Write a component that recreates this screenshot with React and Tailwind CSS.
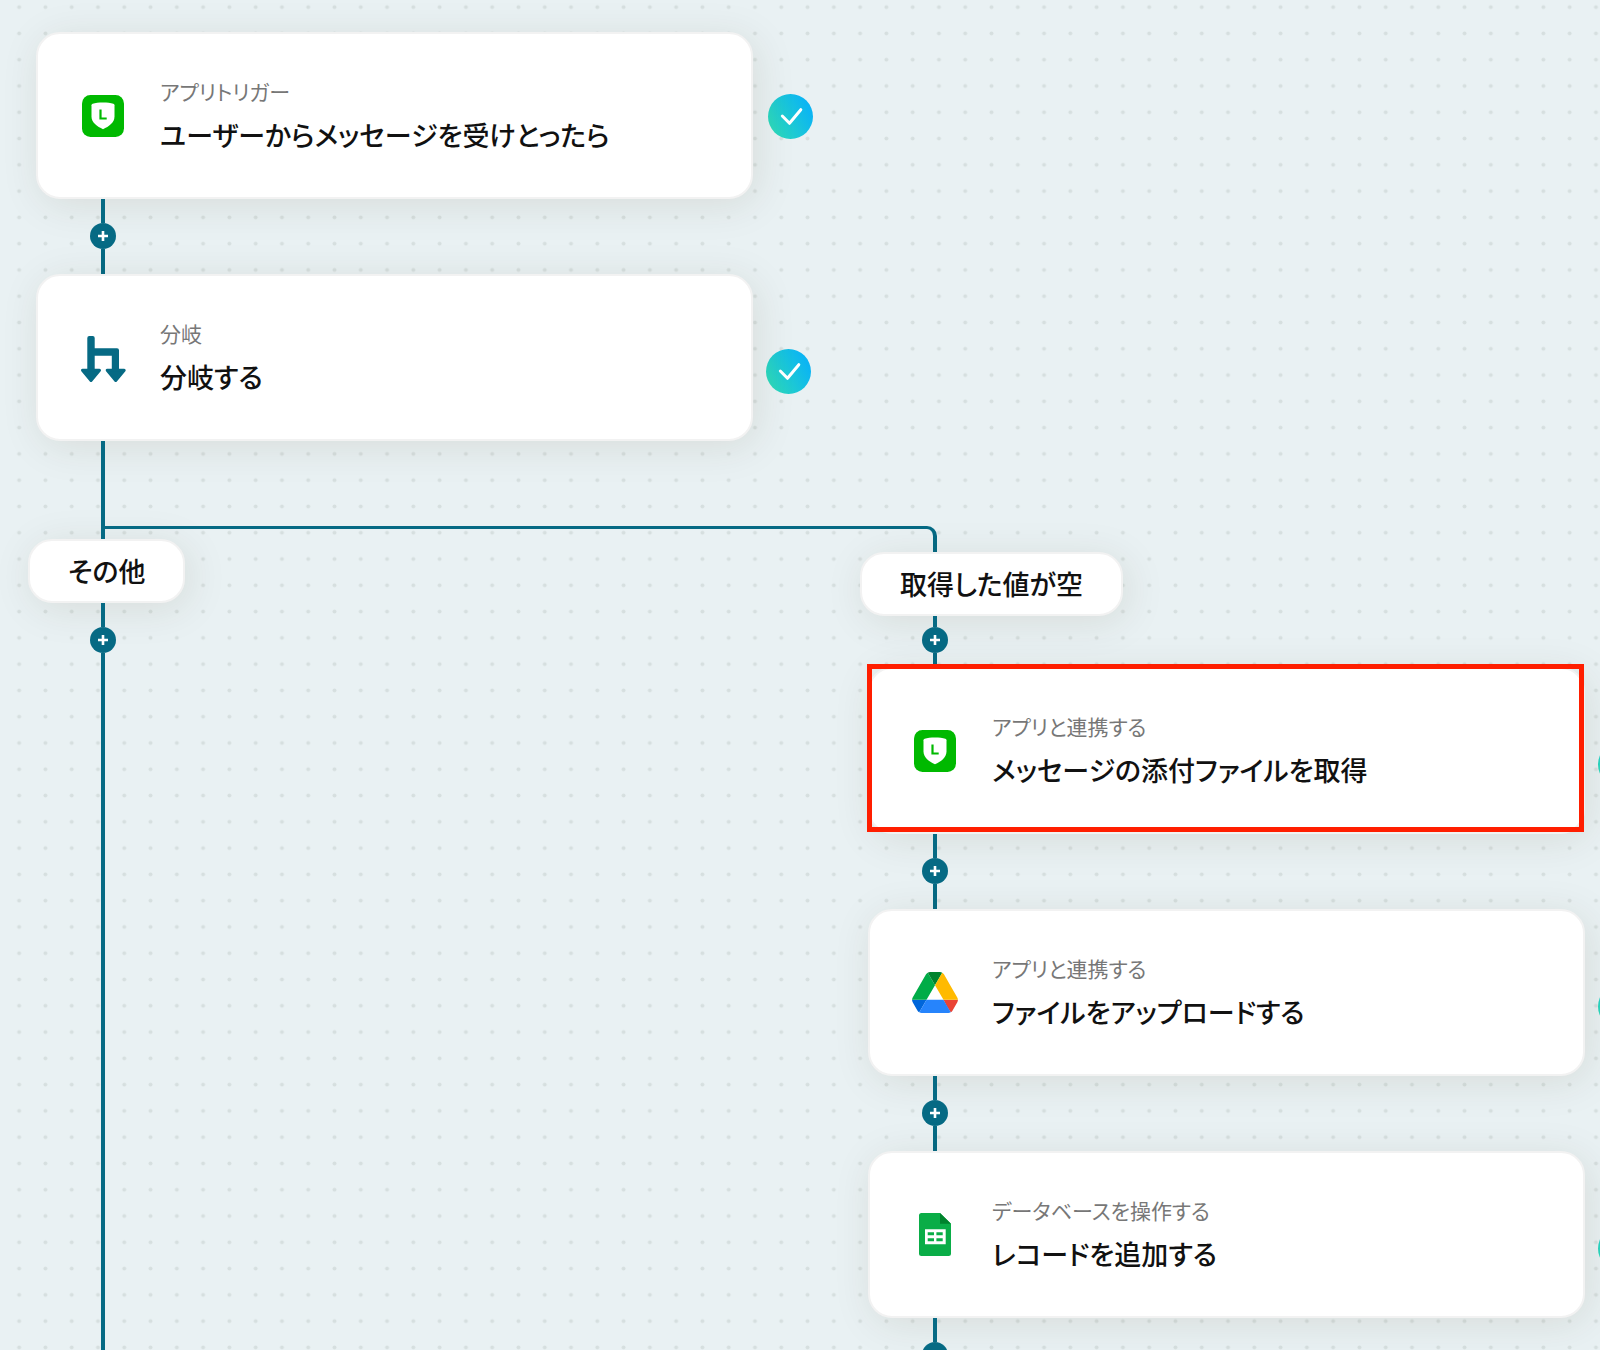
import React from "react";

function DotGrid() {
  return (
    <svg className="absolute inset-0 size-full" aria-hidden="true">
      <defs>
        <pattern
          id="dots"
          width="100"
          height="100"
          patternUnits="userSpaceOnUse"
          patternTransform="translate(6 -6) scale(0.2628)"
        >
          <circle cx="50" cy="50" r="7.5" fill="#d6dfdf" />
        </pattern>
      </defs>
      <rect width="100%" height="100%" fill="url(#dots)" />
    </svg>
  );
}

function LineIcon() {
  return (
    <svg viewBox="0 0 42 42" className="size-[42px]" aria-hidden="true">
      <rect width="42" height="42" rx="8.5" fill="#00b900" />
      <path
        d="M21 7.4c4.200 0 7.800.5 10.300 1.300.8.3 1.200.8 1.200 1.600v11.200c0 6-5.500 10-11.500 12.700C15 31.500 9.500 27.500 9.500 21.500V10.300c0-.8.4-1.300 1.200-1.600C13.200 7.900 16.800 7.400 21 7.400z"
        fill="#fff"
      />
      <path d="M18.500 14.600v8.900h6.200" fill="none" stroke="#00b900" strokeWidth="2.200" />
    </svg>
  );
}

function BranchIcon() {
  return (
    <svg viewBox="-1 -1 46 46" className="size-[46px] overflow-visible" fill="#066a84" aria-hidden="true">
      <path d="M6.300 2a2 2 0 0 1 2-2h3.400a2 2 0 0 1 2 2v10.300H36a2 2 0 0 1 2 2V34h-7.200V19.700H13.700V34H6.300z" />
      <path
        d="M1.500 34.200h17L10 44.500zM26.200 34.200h17L34.700 44.500z"
        stroke="#066a84"
        strokeWidth="3"
        strokeLinejoin="round"
      />
    </svg>
  );
}

function DriveIcon() {
  return (
    <svg viewBox="0 0 87.3 78" className="h-[41px] w-[46px]" aria-hidden="true">
      <path d="m6.6 66.85 3.85 6.65c.8 1.4 1.950 2.500 3.300 3.300l13.750-23.800h-27.500c0 1.550.4 3.100 1.200 4.500z" fill="#0066da" />
      <path d="m43.650 25-13.750-23.800c-1.350.8-2.500 1.900-3.300 3.300l-25.400 44a9.060 9.060 0 0 0 -1.200 4.500h27.500z" fill="#00ac47" />
      <path d="m73.550 76.800c1.350-.8 2.500-1.900 3.300-3.300l1.600-2.750 7.650-13.250c.8-1.400 1.200-2.950 1.200-4.500h-27.502l5.852 11.500z" fill="#ea4335" />
      <path d="m43.650 25 13.750-23.800c-1.350-.8-2.900-1.200-4.500-1.200h-18.500c-1.600 0-3.150.45-4.500 1.200z" fill="#00832d" />
      <path d="m59.800 53h-32.300l-13.750 23.800c1.350.8 2.900 1.200 4.500 1.200h50.800c1.600 0 3.150-.45 4.500-1.200z" fill="#2684fc" />
      <path d="m73.400 26.500-12.700-22c-.8-1.400-1.950-2.500-3.300-3.300l-13.750 23.800 16.150 28h27.450c0-1.550-.4-3.100-1.200-4.500z" fill="#ffba00" />
    </svg>
  );
}

function SheetsIcon() {
  return (
    <svg viewBox="0 0 32 43" className="h-[43px] w-8" aria-hidden="true">
      <path d="M2.500 0H21l11 10.700v29.800a2.500 2.500 0 0 1-2.500 2.500h-27A2.500 2.500 0 0 1 0 40.500v-38A2.500 2.500 0 0 1 2.500 0z" fill="#0aad47" />
      <path d="M21 0l11 10.700H21z" fill="#00832d" />
      <path
        fillRule="evenodd"
        d="M6 16.300h20.700v15H6zM8.700 19.300v3H15v-3zM17.400 19.300v3h6.300v-3zM8.700 25.300v3H15v-3zM17.400 25.300v3h6.300v-3z"
        fill="#fff"
      />
    </svg>
  );
}

function DoneBadge({ raised }) {
  return (
    <div className={raised ? "ml-[15px] mt-[62px] w-[43px]" : "ml-[13px] mt-[75px] w-[45px]"}>
      <svg viewBox="0 0 45 45" className="size-[45px]" role="img" aria-label="完了">
        <defs>
          <linearGradient id="done" x1="0.05" y1="0.75" x2="0.9" y2="0.3">
            <stop offset="0" stopColor="#2cd9bb" />
            <stop offset="1" stopColor="#0bb5f3" />
          </linearGradient>
        </defs>
        <circle cx="22.5" cy="22.5" r="22.5" fill="url(#done)" />
        <path
          d="M14.300 22l7.200 7.300 11.300-13.600"
          fill="none"
          stroke="#fff"
          strokeWidth="3"
          strokeLinecap="round"
          strokeLinejoin="round"
        />
      </svg>
    </div>
  );
}

function Step({ icon, label, title, raised, highlighted }) {
  return (
    <div className="flex items-start pl-9 pr-[21px]">
      <article className="relative flex h-[167px] min-w-0 flex-1 items-center rounded-3xl border-2 border-[#f2f2f2] bg-white pl-[41px] shadow-[4px_6px_40px_rgba(60,50,0,0.1)]">
        <div className="flex size-12 shrink-0 items-center justify-center">{icon}</div>
        <div className="ml-[33px] min-w-0 pb-0.5">
          <p className="text-[21px] leading-8 text-[#777]">{label}</p>
          <h2 className="mt-2 text-[27px] font-medium leading-10 text-[#111]">{title}</h2>
        </div>
        {highlighted && (
          <div className="pointer-events-none absolute -left-[3px] -top-[5px] -right-px bottom-0 border-[5px] border-[#ff1e00]" />
        )}
      </article>
      <DoneBadge raised={raised} />
    </div>
  );
}

function AddButton() {
  return (
    <button
      type="button"
      aria-label="ステップを追加"
      className="flex size-[26px] shrink-0 items-center justify-center rounded-full bg-[#066a84]"
    >
      <svg viewBox="0 0 10 10" className="size-[10px]" aria-hidden="true">
        <path d="M5 0v10M0 5h10" stroke="#fff" strokeWidth="2.600" />
      </svg>
    </button>
  );
}

function Connector() {
  return (
    <div className="relative ml-[90px] flex h-[75px] w-[26px] shrink-0 flex-col items-center">
      <div className="h-6 w-1 bg-[#066a84]" />
      <AddButton />
      <div className="w-1 flex-1 bg-[#066a84]" />
    </div>
  );
}

function Condition({ children }) {
  return (
    <div className="ml-7 flex h-16 shrink-0 items-center self-start rounded-3xl border-2 border-[#f2f2f2] bg-white px-[38px] text-[27px] font-medium text-[#111] shadow-[4px_6px_40px_rgba(60,50,0,0.1)]">
      {children}
    </div>
  );
}

export default function App() {
  return (
    <main
      lang="ja"
      className="relative h-screen overflow-hidden bg-[#e9f1f3] font-['Noto_Sans_CJK_JP','Noto_Sans',sans-serif] [font-feature-settings:'palt']"
    >
      <DotGrid />
      <div className="relative grid h-full grid-cols-[52%_52%]">
        <section className="flex flex-col pt-8">
          <Step icon={<LineIcon />} label="アプリトリガー" title="ユーザーからメッセージを受けとったら" raised />
          <Connector />
          <Step icon={<BranchIcon />} label="分岐" title="分岐する" />
          <div className="relative ml-[101px] flex h-[98px] w-full shrink-0">
            <div className="w-1 shrink-0 bg-[#066a84]" />
            <div className="mt-[85px] h-[26px] w-full shrink-0 rounded-tr-[10px] border-r-4 border-t-[3px] border-[#066a84]" />
          </div>
          <Condition>その他</Condition>
          <div className="relative ml-[90px] flex w-[26px] flex-1 flex-col items-center">
            <div className="h-6 w-1 bg-[#066a84]" />
            <AddButton />
            <div className="w-1 flex-1 bg-[#066a84]" />
          </div>
        </section>
        <section className="relative flex flex-col pt-[552px]">
          <Condition>取得した値が空</Condition>
          <div className="relative ml-[90px] flex h-[51px] w-[26px] shrink-0 flex-col items-center">
            <div className="h-[11px] w-1 bg-[#066a84]" />
            <AddButton />
            <div className="w-1 flex-1 bg-[#066a84]" />
          </div>
          <Step icon={<LineIcon />} label="アプリと連携する" title="メッセージの添付ファイルを取得" highlighted />
          <Connector />
          <Step icon={<DriveIcon />} label="アプリと連携する" title="ファイルをアップロードする" />
          <Connector />
          <Step icon={<SheetsIcon />} label="データベースを操作する" title="レコードを追加する" />
          <Connector />
        </section>
      </div>
    </main>
  );
}
